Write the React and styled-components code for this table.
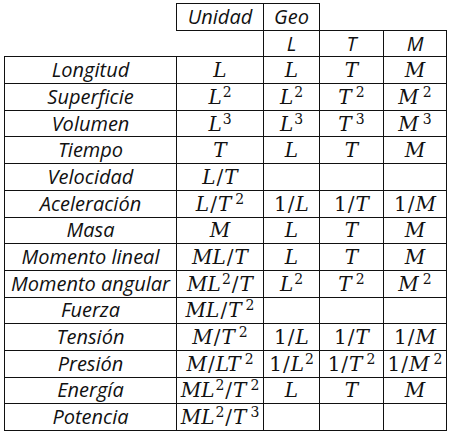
import React from "react";
import styled, {createGlobalStyle} from "styled-components";

const GlobalStyle = createGlobalStyle`
  html, body {
    margin: 0;
    padding: 0;
    background: #fff;
  }
`;

const Page = styled.div`
  padding: 3px 0 0 4px;
`;

const Table = styled.table`
  border-collapse: collapse;
  table-layout: fixed;
  width: 442px;
  height: 428px;
  color: #000;
`;

const Cell = styled.td`
  border: ${p => (p.$blank ? "none" : "1px solid #111")};
  padding: 0;
  text-align: center;
  vertical-align: middle;
  white-space: nowrap;
  line-height: 1;
`;

const Label = styled.span`
  font-family: "Open Sans", "Noto Sans", sans-serif;
  font-style: italic;
  font-size: 20px;
  color: #111;
`;

const MathText = styled.span`
  font-family: "DejaVu Serif", "Liberation Serif", serif;
  font-size: 20px;
  color: #111;
`;

const Sym = styled.span`
  font-style: ${p => (p.$upright ? "normal" : "italic")};
  margin: ${p => (p.$slash ? "0 1px" : "0")};
`;

const Sup = styled.span`
  font-size: 14px;
  font-style: normal;
  position: relative;
  top: -0.5em;
  margin-left: ${p => (p.$gap ? "4px" : "1px")};
`;

// "ML^2/T^2" -> pieces
const Math = ({expr}) => {
    const parts = [];
    for (let i = 0; i < expr.length; i++) {
        const ch = expr[i];
        if (ch === "^") {
            const prev = expr[i - 1];
            parts.push(<Sup key={i} $gap={prev === "T" || prev === "M"}>{expr[i + 1]}</Sup>);
            i++;
        } else if (ch === "/") {
            parts.push(<Sym key={i} $upright $slash>/</Sym>);
        } else if (/[0-9]/.test(ch)) {
            parts.push(<Sym key={i} $upright>{ch}</Sym>);
        } else {
            parts.push(<Sym key={i}>{ch}</Sym>);
        }
    }
    return <MathText>{parts}</MathText>;
};

const rows = [
    ["Longitud", "L", "L", "T", "M"],
    ["Superficie", "L^2", "L^2", "T^2", "M^2"],
    ["Volumen", "L^3", "L^3", "T^3", "M^3"],
    ["Tiempo", "T", "L", "T", "M"],
    ["Velocidad", "L/T", "", "", ""],
    ["Aceleración", "L/T^2", "1/L", "1/T", "1/M"],
    ["Masa", "M", "L", "T", "M"],
    ["Momento lineal", "ML/T", "L", "T", "M"],
    ["Momento angular", "ML^2/T", "L^2", "T^2", "M^2"],
    ["Fuerza", "ML/T^2", "", "", ""],
    ["Tensión", "M/T^2", "1/L", "1/T", "1/M"],
    ["Presión", "M/LT^2", "1/L^2", "1/T^2", "1/M^2"],
    ["Energía", "ML^2/T^2", "L", "T", "M"],
    ["Potencia", "ML^2/T^3", "", "", ""],
];

export default function App() {
    return (
        <Page>
            <GlobalStyle/>
            <Table>
                <colgroup>
                    <col style={{width: 172}}/>
                    <col style={{width: 87}}/>
                    <col style={{width: 56}}/>
                    <col style={{width: 64}}/>
                    <col style={{width: 63}}/>
                </colgroup>
                <tbody>
                <tr>
                    <Cell $blank/>
                    <Cell><Label>Unidad</Label></Cell>
                    <Cell><Label>Geo</Label></Cell>
                    <Cell $blank/>
                    <Cell $blank/>
                </tr>
                <tr>
                    <Cell $blank/>
                    <Cell $blank/>
                    <Cell><Label>L</Label></Cell>
                    <Cell><Label>T</Label></Cell>
                    <Cell><Label>M</Label></Cell>
                </tr>
                {rows.map((row, index) => (
                    <tr key={index}>
                        <Cell><Label>{row[0]}</Label></Cell>
                        {row.slice(1).map((v, j) => (
                            <Cell key={j}>{v ? <Math expr={v}/> : null}</Cell>
                        ))}
                    </tr>
                ))}
                </tbody>
            </Table>
        </Page>
    );
}
